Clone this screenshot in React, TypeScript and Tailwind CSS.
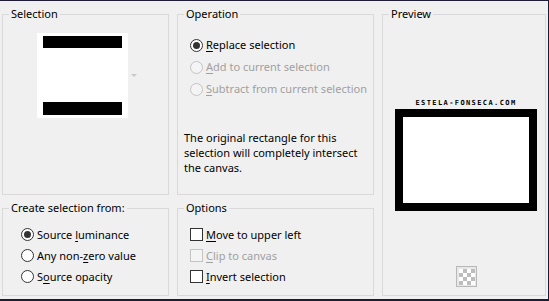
import React from 'react';

const font = { fontFamily: '"Noto Sans", "Segoe UI", sans-serif' };

// underline one letter, like a Windows mnemonic
const Mn: React.FC<{ text: string; at: number }> = ({ text, at }) => (
  <span>
    {text.slice(0, at)}
    <span className="underline underline-offset-[2px]">{text[at]}</span>
    {text.slice(at + 1)}
  </span>
);

const Radio: React.FC<{ checked?: boolean; disabled?: boolean }> = ({ checked, disabled }) => (
  <span
    className={`flex items-center justify-center w-[13px] h-[13px] rounded-full border shrink-0 ${
      disabled ? 'border-[#c4c4c4] bg-[#f4f4f4]' : 'border-[#333] bg-white'
    }`}
  >
    {checked && <span className="w-[7px] h-[7px] rounded-full bg-[#333]" />}
  </span>
);

const Check: React.FC<{ disabled?: boolean }> = ({ disabled }) => (
  <span
    className={`w-[13px] h-[13px] border shrink-0 ${
      disabled ? 'border-[#c4c4c4] bg-[#f4f4f4]' : 'border-[#333] bg-white'
    }`}
  />
);

const Row: React.FC<{ h: string; disabled?: boolean; children: React.ReactNode }> = ({ h, disabled, children }) => (
  <div className={`flex items-center gap-[3px] whitespace-nowrap ${h} ${disabled ? 'text-[#a0a0a0]' : 'text-black'}`}>
    {children}
  </div>
);

const Group: React.FC<{ title: string; className: string; children: React.ReactNode }> = ({ title, className, children }) => (
  <fieldset className={`border border-[#d9d9d9] ${className}`}>
    <legend className="ml-[6px] px-[2px] leading-[16px] text-black">{title}</legend>
    {children}
  </fieldset>
);

const Checker = () => (
  <svg width="21" height="21" viewBox="0 0 21 21">
    <rect x="0.5" y="0.5" width="20" height="20" fill="#e8e8e8" stroke="#b8b8b8" />
    {[0, 1, 2, 3].map((r) =>
      [0, 1, 2, 3].map((c) => (
        <rect key={`${r}-${c}`} x={3 + c * 4} y={3 + r * 4} width="4" height="4" fill={(r + c) % 2 ? '#bdbdbd' : '#ffffff'} />
      ))
    )}
  </svg>
);

export default function App() {
  return (
    <div
      style={font}
      className="w-[549px] h-[301px] bg-[#f0f0f0] border-t border-r border-b-2 border-[#1d1b35] pl-[2px] pt-[5px] flex gap-[8px] text-[11px] leading-[16px]"
    >
      <div className="flex flex-col gap-[5px] w-[167px]">
        <Group title="Selection" className="h-[189px]">
          <div className="flex items-center mt-[11px] ml-[34px]">
            <div className="w-[91px] h-[85px] bg-white flex flex-col justify-between items-center pt-[3px] pb-[3px]">
              <div className="w-[79px] h-[12px] bg-black" />
              <div className="w-[79px] h-[13px] bg-black" />
            </div>
            <span className="ml-[3px] w-0 h-0 border-l-[3px] border-r-[3px] border-t-[3px] border-l-transparent border-r-transparent border-t-[#c8c8c8]" />
          </div>
        </Group>
        <Group title="Create selection from:" className="h-[96px]">
          <div className="flex flex-col pt-[8px] pl-[18px]">
            <Row h="h-[21px]">
              <Radio checked />
              <Mn text="Source luminance" at={7} />
            </Row>
            <Row h="h-[21px]">
              <Radio />
              <Mn text="Any non-zero value" at={8} />
            </Row>
            <Row h="h-[21px]">
              <Radio />
              <Mn text="Source opacity" at={1} />
            </Row>
          </div>
        </Group>
      </div>

      <div className="flex flex-col gap-[5px] w-[197px]">
        <Group title="Operation" className="h-[189px]">
          <div className="flex flex-col pt-[12px] pl-[12px]">
            <Row h="h-[22px]">
              <Radio checked />
              <Mn text="Replace selection" at={0} />
            </Row>
            <Row h="h-[22px]" disabled>
              <Radio disabled />
              <Mn text="Add to current selection" at={0} />
            </Row>
            <Row h="h-[22px]" disabled>
              <Radio disabled />
              <Mn text="Subtract from current selection" at={0} />
            </Row>
          </div>
          <p className="mt-[30px] pl-[6px] pr-[4px] leading-[15px] text-black">
            The original rectangle for this
            <br />
            selection will completely intersect
            <br />
            the canvas.
          </p>
        </Group>
        <Group title="Options" className="h-[96px]">
          <div className="flex flex-col pt-[8px] pl-[12px]">
            <Row h="h-[21px]">
              <Check />
              <Mn text="Move to upper left" at={0} />
            </Row>
            <Row h="h-[21px]" disabled>
              <Check disabled />
              <Mn text="Clip to canvas" at={0} />
            </Row>
            <Row h="h-[21px]">
              <Check />
              <Mn text="Invert selection" at={0} />
            </Row>
          </div>
        </Group>
      </div>

      <Group title="Preview" className="w-[164px] h-[290px]">
        <div className="flex flex-col items-center pl-[4px] pt-[78px]">
          <div
            className="text-[7px] leading-[7px] font-bold tracking-[1.4px] text-black"
            style={{ fontFamily: '"DejaVu Sans Mono", monospace' }}
          >
            ESTELA-FONSECA.COM
          </div>
          <div className="mt-[2px] w-[142px] h-[102px] border-[8px] border-black bg-white" />
          <div className="mt-[55px]">
            <Checker />
          </div>
        </div>
      </Group>
    </div>
  );
}
